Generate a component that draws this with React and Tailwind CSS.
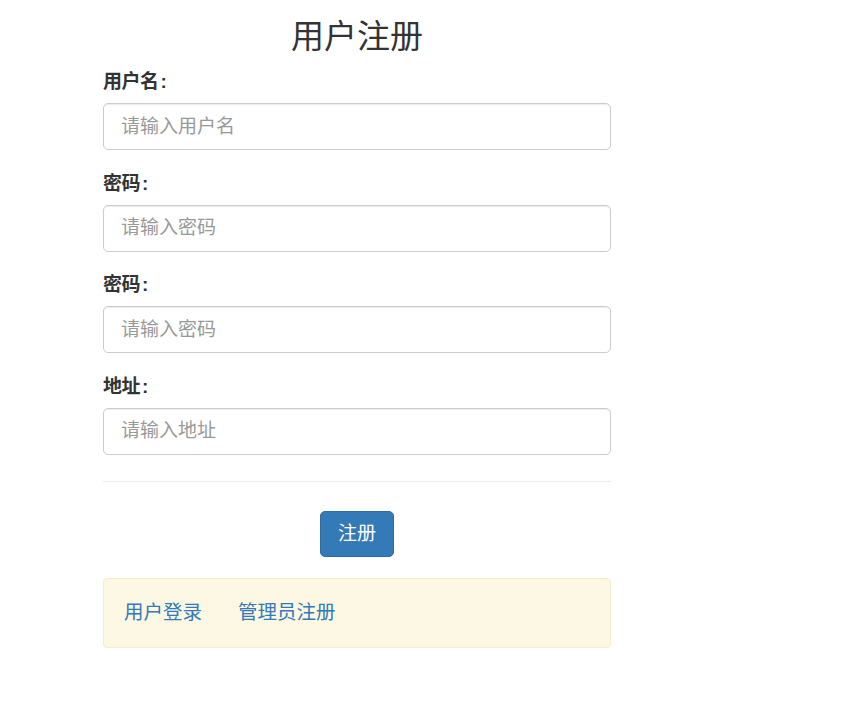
export default function App() {
  const fields = [
    { label: "用户名", placeholder: "请输入用户名" },
    { label: "密码", placeholder: "请输入密码" },
    { label: "密码", placeholder: "请输入密码" },
    { label: "地址", placeholder: "请输入地址" },
  ];
  return (
    <div
      className="min-h-[719px] bg-white text-[#333]"
      style={{ fontFamily: '"Helvetica Neue", "Liberation Sans", "Noto Sans CJK SC", sans-serif' }}
    >
      <div className="ml-[103px] w-[508px] pt-[18px]">
        <h2 className="text-center text-[33px] leading-[38px] font-normal">用户注册</h2>
        <form className="mt-[13px]">
          {fields.map((f, i) => (
            <div key={i} className="mb-[20.5px]">
              <label className="block text-[19px] leading-[26px] font-bold mb-[8px] tracking-[-0.5px]">
                {f.label}
                <span className="ml-[2px]">:</span>
              </label>
              <input
                type="text"
                placeholder={f.placeholder}
                className="block w-full h-[47px] px-[17px] text-[19px] border border-[#ccc] rounded-[5px] shadow-[inset_0_1px_1px_rgba(0,0,0,0.075)] outline-none placeholder:text-[#999]"
              />
            </div>
          ))}
          <hr className="mt-[26.5px] border-0 border-t border-[#eee]" />
          <div className="flex justify-center mt-[29px]">
            <button
              type="button"
              className="h-[46px] px-[17px] text-[19px] text-white bg-[#337ab7] border border-[#2e6da4] rounded-[5px]"
            >
              注册
            </button>
          </div>
        </form>
        <div className="mt-[21px] h-[70px] flex items-center px-[20px] gap-[36px] bg-[#fcf8e3] border border-[#faebcc] rounded-[4px]">
          <a href="#" className="text-[19.5px] text-[#337ab7]">用户登录</a>
          <a href="#" className="text-[19.5px] text-[#337ab7]">管理员注册</a>
        </div>
      </div>
    </div>
  );
}
